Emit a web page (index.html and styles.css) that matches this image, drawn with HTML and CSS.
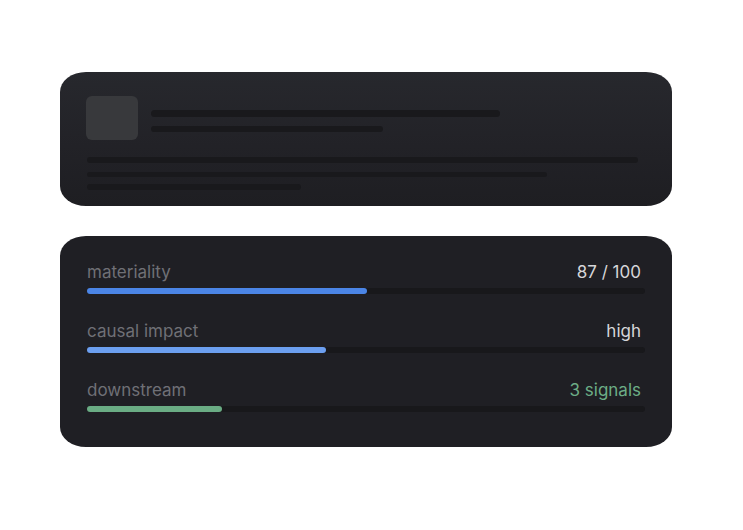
FILE: index.html
```html
<!DOCTYPE html>
<html lang="en">
<head>
  <meta charset="UTF-8">
  <title>Signal Card</title>
  <link rel="stylesheet" href="styles.css">
</head>
<body>
  <div class="stack">
    <div class="card skeleton">
      <div class="sk-head">
        <div class="sk-thumb"></div>
        <div class="sk-title">
          <div class="sk-line l1"></div>
          <div class="sk-line l2"></div>
        </div>
      </div>
      <div class="sk-body">
        <div class="sk-line l3"></div>
        <div class="sk-line l4"></div>
        <div class="sk-line l5"></div>
      </div>
    </div>

    <div class="card metrics">
      <div class="metric">
        <div class="metric-row">
          <span class="label">materiality</span>
          <span class="value">87 / 100</span>
        </div>
        <div class="track"><div class="fill blue" style="width: 50.2%"></div></div>
      </div>
      <div class="metric">
        <div class="metric-row">
          <span class="label">causal impact</span>
          <span class="value">high</span>
        </div>
        <div class="track"><div class="fill light-blue" style="width: 42.8%"></div></div>
      </div>
      <div class="metric">
        <div class="metric-row">
          <span class="label">downstream</span>
          <span class="value green-text">3 signals</span>
        </div>
        <div class="track"><div class="fill green" style="width: 24.2%"></div></div>
      </div>
    </div>
  </div>
</body>
</html>
```

FILE: styles.css
```css
body { margin: 0; background: #fff; font-family: Inter, "Noto Sans", sans-serif; }
.stack { display: flex; flex-direction: column; gap: 30px; padding: 72px 71px 0 60px; }
.card { border-radius: 26px / 20px; }

.skeleton { height: 134px; box-sizing: border-box; padding: 24px 34px 0 26px; background: linear-gradient(180deg, #27282d 0%, #222227 55%, #1e1e22 100%); }
.sk-head { display: flex; gap: 13px; }
.sk-thumb { width: 52px; height: 44px; border-radius: 6px; background: #38393c; flex: none; }
.sk-title { padding-top: 14px; display: flex; flex-direction: column; gap: 9px; }
.sk-line { background: #19191c; border-radius: 4px; height: 6px; filter: blur(0.4px); }
.sk-line.l1 { width: 349px; height: 7px; }
.sk-line.l2 { width: 232px; }
.sk-body { display: flex; flex-direction: column; gap: 8px; padding: 17px 0 0 1px; }
.sk-line.l3 { width: 551px; }
.sk-line.l4 { width: 460px; height: 5px; margin-top: 1px; }
.sk-line.l5 { width: 214px; margin-top: -1px; }

.metrics { background: #1f1f24; padding: 26px 27px 35px 27px; display: flex; flex-direction: column; gap: 27px; }
.metric { display: flex; flex-direction: column; gap: 6px; }
.metric-row { display: flex; justify-content: space-between; font-size: 17px; line-height: 20px; padding-right: 4px; }
.label { color: #6f7076; }
.value { color: #d6d6d9; }
.green-text { color: #6cad86; }
.track { height: 6px; border-radius: 3px; background: #18181b; }
.fill { height: 100%; border-radius: 3px; }
.fill.blue { background: #4b85e6; }
.fill.light-blue { background: #6c9ff0; }
.fill.green { background: #6aac84; }
```
